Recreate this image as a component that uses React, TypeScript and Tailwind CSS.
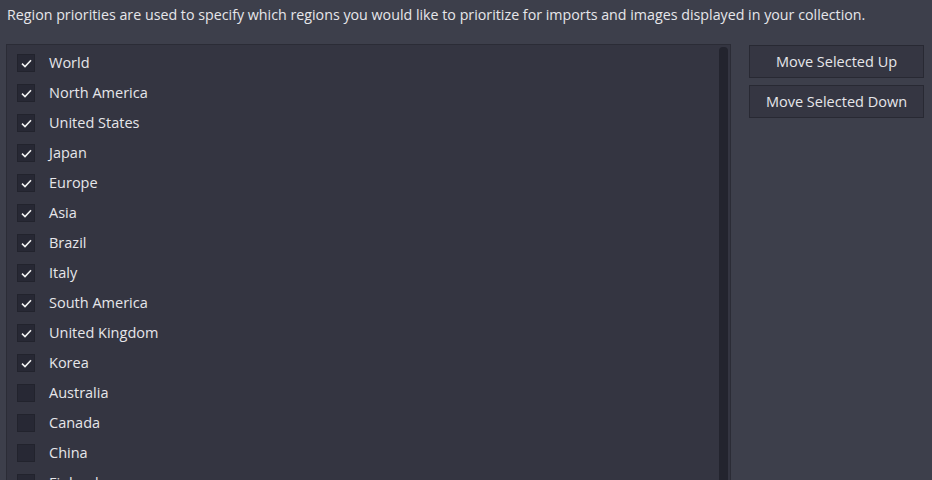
const regions: [string, boolean][] = [
  ["World", true],
  ["North America", true],
  ["United States", true],
  ["Japan", true],
  ["Europe", true],
  ["Asia", true],
  ["Brazil", true],
  ["Italy", true],
  ["South America", true],
  ["United Kingdom", true],
  ["Korea", true],
  ["Australia", false],
  ["Canada", false],
  ["China", false],
  ["Finland", false],
  ["France", false],
];

function Check({ on }: { on: boolean }) {
  return (
    <div className="w-[18px] h-[18px] bg-[#272834] border border-[#22232d] flex items-center justify-center shrink-0">
      {on && (
        <svg width="11" height="9" viewBox="0 0 11 9" fill="none">
          <path d="M1 4.6 L4 7.5 L10 1.2" stroke="#f2f2f2" strokeWidth="1.6" />
        </svg>
      )}
    </div>
  );
}

export default function App() {
  return (
    <div
      className="w-[932px] h-[480px] overflow-hidden bg-[#3d3f4b] text-[#e6e6ea]"
      style={{ fontFamily: '"Open Sans", "Noto Sans", sans-serif' }}
    >
      <p className="pl-[7px] pt-[5px] h-[44px] text-[14.25px] leading-[20px]">
        Region priorities are used to specify which regions you would like to prioritize for imports and images displayed in your collection.
      </p>
      <div className="flex items-start">
        <div className="ml-[6px] w-[725px] h-[460px] bg-[#343541] border border-[#2b2c36] flex">
          <div className="flex-1 pt-[3px]">
            {regions.map(([name, on]) => (
              <div key={name} className="h-[30px] flex items-center pl-[10px] gap-[14px]">
                <Check on={on} />
                <span className="text-[14.5px]">{name}</span>
              </div>
            ))}
          </div>
          <div className="w-[9px] mr-[2px] mt-[2px] rounded-t-[4px] bg-[#23242e]" />
        </div>
        <div className="ml-[18px] mt-[1px] flex flex-col gap-[7px]">
          <button className="w-[175px] h-[33px] bg-[#353642] border border-[#282933] text-[14.5px] text-[#e6e6ea]">
            Move Selected Up
          </button>
          <button className="w-[175px] h-[33px] bg-[#353642] border border-[#282933] text-[14.5px] text-[#e6e6ea]">
            Move Selected Down
          </button>
        </div>
      </div>
    </div>
  );
}
